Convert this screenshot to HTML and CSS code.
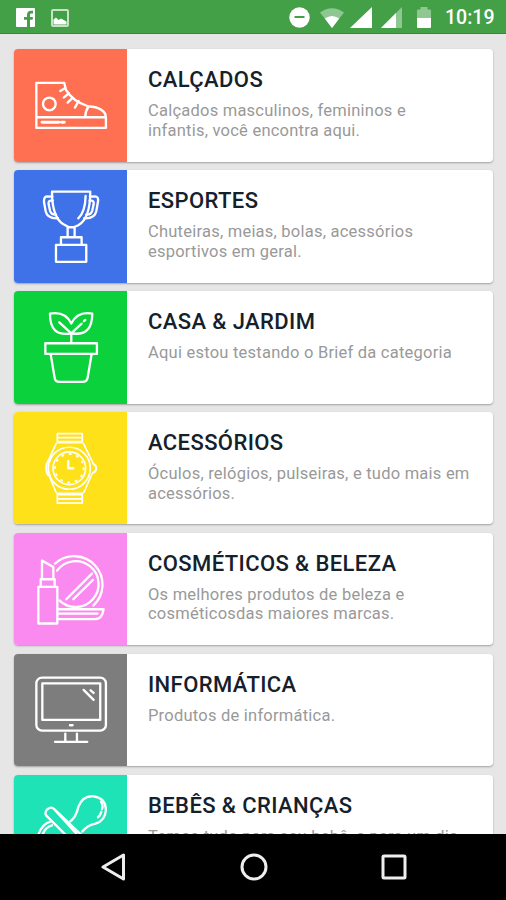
FILE: index.html
```
<!DOCTYPE html>
<html lang="pt-BR">
<head>
    <meta charset="UTF-8">
    <meta name="viewport" content="width=device-width, initial-scale=1"/>
    <title>Categorias</title>
    <link rel="stylesheet" href="styles.css">
</head>

<body class="body">
    <header class="status">
        <div class="notes">
            <svg width="19" height="19" viewBox="0 0 19 19">
                <rect width="19" height="19" rx="1" fill="#fff"/>
                <path d="M11 19v-7.2H8V9h3V7c0-3 1.7-4.2 4-4.2h2v2.7h-1.5c-1.2 0-1.5.6-1.5 1.6V9h3l-.4 2.8H14V19z" fill="#43a047"/>
            </svg>
            <svg width="18" height="18" viewBox="0 0 18 18">
                <rect x="1" y="1" width="16" height="16" rx="1" fill="none" stroke="#c5e3c6" stroke-width="2"/>
                <path d="M2.500 15.500v-5l2.500-2 2.500 2.500 2.500-1.500 5.500 3v3z" fill="#fff"/>
            </svg>
        </div>
        <div class="signals">
            <svg class="dnd" width="21" height="21" viewBox="0 0 21 21">
                <circle cx="10.500" cy="10.500" r="10.200" fill="#fff"/>
                <path d="M5.500 10h10" stroke="#43a047" stroke-width="2"/>
            </svg>
            <svg class="wifi" width="24" height="20" viewBox="0 0 24 20">
                <path d="M0 4.500Q12-4 24 4.500L12 20z" fill="#8ec791"/>
                <path d="M4.800 10.500Q12 5.500 19.200 10.500L12 20z" fill="#fff"/>
            </svg>
            <svg class="cell" width="22" height="21" viewBox="0 0 22 21">
                <path d="M0 21L22 0V21z" fill="#fff"/>
            </svg>
            <svg class="cell2" width="21" height="21" viewBox="0 0 21 21">
                <path d="M0 21L21 0V21z" fill="#8ec791"/>
                <path d="M0 21L15 6V21z" fill="#fff"/>
            </svg>
            <svg class="battery" width="14" height="21" viewBox="0 0 14 21">
                <path d="M0 11V3.500Q0 2.500 1 2.500H3.500V0h7v2.500H13Q14 2.500 14 3.500V11z" fill="#8ec791"/>
                <path d="M0 11H14v9q0 1-1 1H1q-1 0-1-1z" fill="#fff"/>
            </svg>
            <span class="clock">10:19</span>
        </div>
    </header>

    <main class="list">
        <article class="card">
            <div class="icon shoes">
                <svg viewBox="-3 0 338 338">
                    <path d="M64 102H148L153 123Q174 158 219 172Q273 176 273 207V237H64zM64 205H273M221 172Q211 187 211 204"/>
                    <circle cx="103" cy="165" r="19"/>
                    <path d="M151 117l-15 9M162 133l-16 13M173 147l-15 14M191 156l-11 20"/>
                    <path d="M81 220H132M140 220h8" stroke-width="9"/>
                </svg>
            </div>
            <div class="text">
                <h2>CALÇADOS</h2>
                <p>Calçados masculinos, femininos e<br>infantis, você encontra aqui.</p>
            </div>
        </article>

        <article class="card">
            <div class="icon sports">
                <svg viewBox="-3 0 338 338">
                    <path d="M111 65H226Q226 145 190 166L176 172H162L147 164Q111 143 111 65z"/>
                    <path d="M112 80L96 79Q86 80 87 96L92 124Q97 147 129 145M225 80L241 79Q252 80 249 96L244 124Q239 147 208 145"/>
                    <path d="M113 92H107Q99 93 101 104L105 122Q109 135 123 134M224 92H230Q238 93 236 104L232 122Q228 135 214 134"/>
                    <path d="M212 78Q211 126 190 145M158 172V202M179 172V202M138 202H200V225H138zM123 225H214V276H123z"/>
                </svg>
            </div>
            <div class="text">
                <h2>ESPORTES</h2>
                <p>Chuteiras, meias, bolas, acessórios esportivos em geral.</p>
            </div>
        </article>

        <article class="card">
            <div class="icon garden">
                <svg viewBox="-3 0 338 338">
                    <path d="M169 155V127M169 127Q104 139 105 68Q151 60 169 98Q187 60 232 68Q232 138 169 127zM169 127L133 94M169 127L200 98M207 90l4-3"/>
                    <path d="M91 157H246V189H91zM107 190L119 261Q120 273 134 273H203Q216 273 218 261L230 190"/>
                </svg>
            </div>
            <div class="text">
                <h2>CASA &amp; JARDIM</h2>
                <p>Aqui estou testando o Brief da categoria</p>
            </div>
        </article>

        <article class="card">
            <div class="icon watch">
                <svg viewBox="-3 0 338 338">
                    <circle cx="163" cy="169" r="63" stroke-width="5"/>
                    <circle cx="163" cy="169" r="49" stroke-width="5"/>
                    <circle cx="163" cy="169" r="43" stroke-width="6" stroke-dasharray="3 19.500"/>
                    <path d="M160 148V169H175"/>
                    <path d="M127 65H202V89H127zM129 77H200M123 96L98 150M206 96L234 153M127 274H202V248H127zM129 261H200M102 190L123 241M232 184L207 241" stroke-width="5"/>
                    <path d="M105 147Q94 146 94 169Q94 192 105 191M235 156Q244 160 244 169Q244 179 235 182" stroke-width="6"/>
                    <path d="M125 93H204M126 244H204" stroke-width="4"/>
                </svg>
            </div>
            <div class="text">
                <h2>ACESSÓRIOS</h2>
                <p>Óculos, relógios, pulseiras, e tudo mais em acessórios.</p>
            </div>
        </article>

        <article class="card">
            <div class="icon beauty">
                <svg viewBox="-3 0 338 338">
                    <path d="M120 92A85 85 0 0 1 235 218M126 113A69 69 0 1 1 134 203"/>
                    <path d="M154 199L231 122M175 199L234 141M131 229H266Q263 259 239 259H131M131 242H248"/>
                    <path d="M81 139V83L115 102V139M77 139H119V162H77zM70 162H127V272H70z"/>
                </svg>
            </div>
            <div class="text">
                <h2>COSMÉTICOS &amp; BELEZA</h2>
                <p>Os melhores produtos de beleza e cosméticosdas maiores marcas.</p>
            </div>
        </article>

        <article class="card">
            <div class="icon computer">
                <svg viewBox="-3 0 338 338">
                    <rect x="64" y="71" width="209" height="159" rx="17"/>
                    <rect x="82" y="88" width="174" height="110"/>
                    <path d="M206 108L236 138M227 109l9 8M165 214h8M151 239V264M186 239V264M120 264H217"/>
                </svg>
            </div>
            <div class="text">
                <h2>INFORMÁTICA</h2>
                <p>Produtos de informática.</p>
            </div>
        </article>

        <article class="card">
            <div class="icon baby">
                <svg viewBox="-3 0 338 338">
                    <path d="M184 176L117 102Q109 94 98 102Q87 112 94 122L168 196M117 102L216 196"/>
                    <path d="M161 143Q184 128 190 96Q203 61 237 64Q273 70 273 105Q271 137 242 146Q218 150 202 170M258 80Q266 93 261 103M259 111Q257 121 249 127"/>
                    <path d="M107 140Q81 145 68 185M111 151Q91 156 82 180"/>
                </svg>
            </div>
            <div class="text">
                <h2>BEBÊS &amp; CRIANÇAS</h2>
                <p>Temos tudo para seu bebê, e para um dia melhor.</p>
            </div>
        </article>
    </main>

    <nav class="navbar">
        <svg width="26" height="28" viewBox="0 0 26 28"><path d="M23.500 2V26L3 14z"/></svg>
        <svg width="28" height="28" viewBox="0 0 28 28"><circle cx="14" cy="14" r="12"/></svg>
        <svg width="26" height="26" viewBox="0 0 26 26"><rect x="2" y="2" width="22" height="22" rx="1"/></svg>
    </nav>
</body>
</html>
```
FILE: styles.css
```
.body{
    margin:0px;
    height:900px;
    display:flex;flex-direction: column;
    overflow:hidden;
    background-color: #e6e6e6;
    font-family: Roboto, "Liberation Sans", sans-serif;
}
svg{
    display:block;flex:none;
}

/* status bar */
.status{
    height:34px;box-sizing: border-box;
    padding:0px 10px 0px 16px;
    display:flex;justify-content: space-between;
    background-color: #43a047;
    border-bottom: 1px solid #1f9427;
}
.notes{
    display:flex;align-items: center;gap:16px;
    padding-top:2px;
}
.signals{
    display:flex;align-items: center;
    padding-top:2px;
}
.wifi{
    margin-left:10px;
}
.cell{
    margin-left:6px;
}
.cell2{
    margin-left:9px;
}
.battery{
    margin-left:15px;
}
.clock{
    margin-left:14px;
    width:51px;
    font-size: 19.5px;font-weight: 500;color:#fff;
    white-space: nowrap;
}

/* categories */
.list{
    flex:1;min-height:0px;
    overflow:hidden;
    padding:15.3px 13px 0px 14.4px;
    display:flex;flex-direction: column;gap:8.4px;
}
.card{
    flex:none;
    height:112.500px;
    display:flex;
    overflow:hidden;
    background-color: #fff;
    border-radius: 4px;
    box-shadow: 0px 1px 2px rgba(0,0,0,0.3);
}
.icon{
    flex:none;width:112.600px;
}
.icon svg{
    width:100%;height:100%;
    fill:none;stroke:#fff;stroke-width:7;
    stroke-linecap: round;stroke-linejoin: round;
}
.shoes{
    background-color: #ff7052;
}
.sports{
    background-color: #3f72e8;
}
.garden{
    background-color: #0bd23c;
}
.watch{
    background-color: #ffe119;
}
.beauty{
    background-color: #fb8af0;
}
.computer{
    background-color: #7d7d7d;
}
.baby{
    background-color: #1de3b6;
}
.text{
    flex:1;
    padding:17px 14px 0px 21px;
}
.text h2{
    margin:0px;
    font-size: 22px;line-height: 28px;font-weight: 500;
    letter-spacing: 0.4px;
    color:#14212b;
}
.text p{
    margin:7px 0px 0px;
    font-size: 16.5px;line-height: 19.6px;
    letter-spacing: 0.23px;
    color:#999;
}

/* android buttons */
.navbar{
    height:66px;
    display:flex;align-items: center;justify-content: space-between;
    padding:0px 99px 0px 100px;box-sizing: border-box;
    background-color: #000;
}
.navbar svg{
    fill:none;stroke:#eee;stroke-width:3;stroke-linejoin: round;
}
```
